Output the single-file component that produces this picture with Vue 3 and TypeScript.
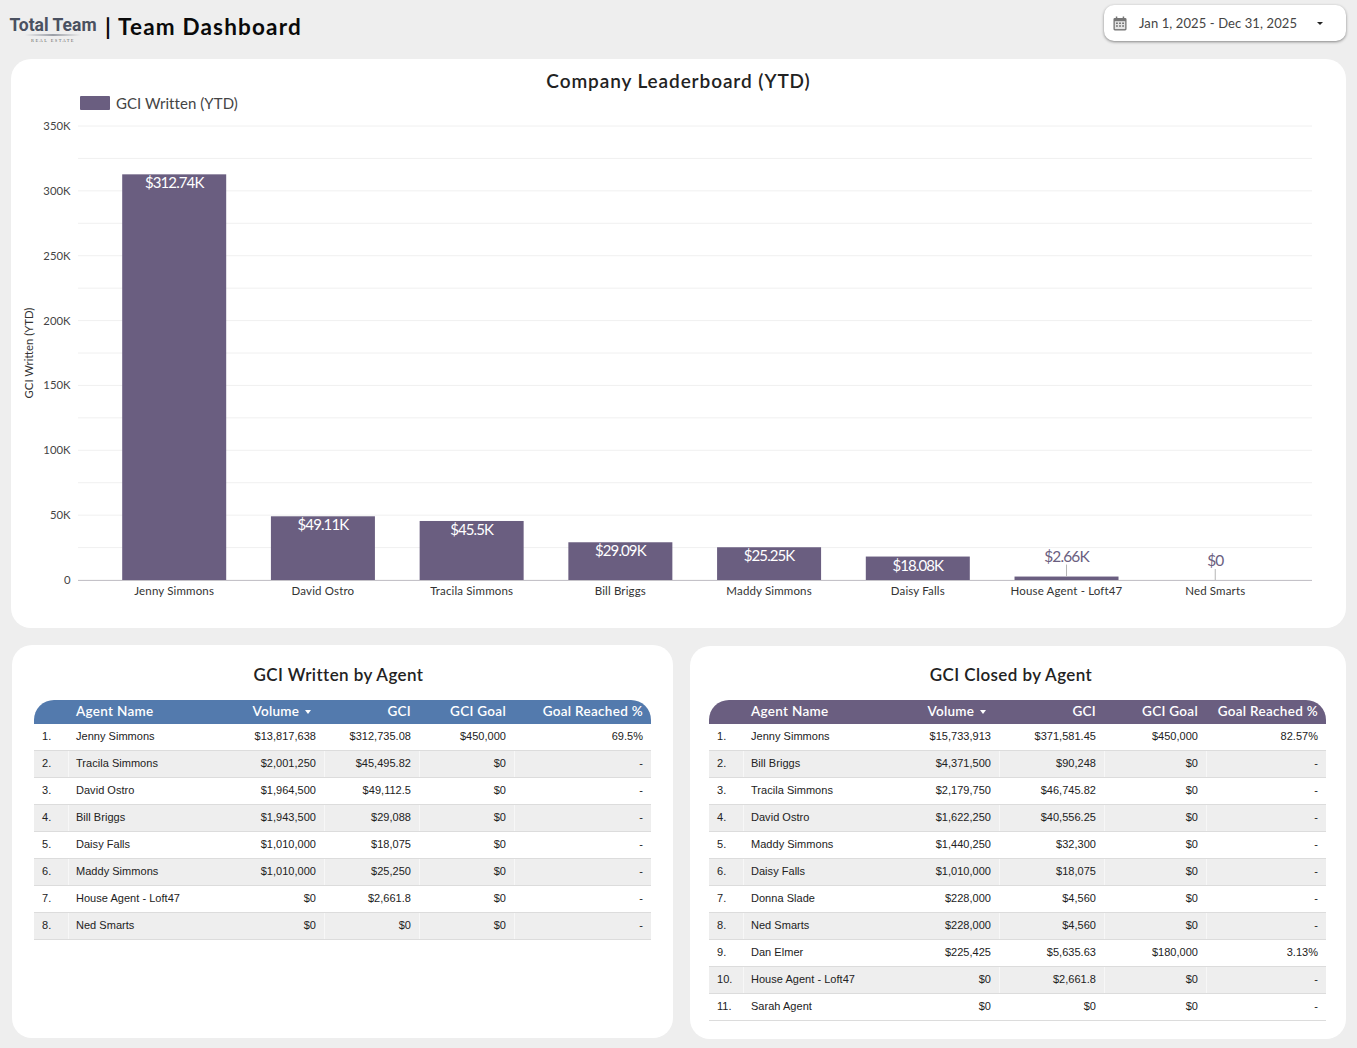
<script setup lang="ts">
interface Row { name: string; volume: string; gci: string; goal: string; reached: string }
interface Bar { name: string; value: number; label: string }

const sans = '"Lato", "Open Sans", sans-serif'
const baseY = 580
const scale = 454 / 350
const ticks: number[] = Array.from({ length: 15 }, (_, i) => i * 25)
const bars: Bar[] = [
  { name: 'Jenny Simmons', value: 312.74, label: '$312.74K' },
  { name: 'David Ostro', value: 49.11, label: '$49.11K' },
  { name: 'Tracila Simmons', value: 45.5, label: '$45.5K' },
  { name: 'Bill Briggs', value: 29.09, label: '$29.09K' },
  { name: 'Maddy Simmons', value: 25.25, label: '$25.25K' },
  { name: 'Daisy Falls', value: 18.08, label: '$18.08K' },
  { name: 'House Agent - Loft47', value: 2.66, label: '$2.66K' },
  { name: 'Ned Smarts', value: 0, label: '$0' }
]
const cx = (i: number): number => 174.2 + i * 148.72
const y = (v: number): number => baseY - v * scale

const written: Row[] = [
  { name: 'Jenny Simmons', volume: '$13,817,638', gci: '$312,735.08', goal: '$450,000', reached: '69.5%' },
  { name: 'Tracila Simmons', volume: '$2,001,250', gci: '$45,495.82', goal: '$0', reached: '-' },
  { name: 'David Ostro', volume: '$1,964,500', gci: '$49,112.5', goal: '$0', reached: '-' },
  { name: 'Bill Briggs', volume: '$1,943,500', gci: '$29,088', goal: '$0', reached: '-' },
  { name: 'Daisy Falls', volume: '$1,010,000', gci: '$18,075', goal: '$0', reached: '-' },
  { name: 'Maddy Simmons', volume: '$1,010,000', gci: '$25,250', goal: '$0', reached: '-' },
  { name: 'House Agent - Loft47', volume: '$0', gci: '$2,661.8', goal: '$0', reached: '-' },
  { name: 'Ned Smarts', volume: '$0', gci: '$0', goal: '$0', reached: '-' }
]
const closed: Row[] = [
  { name: 'Jenny Simmons', volume: '$15,733,913', gci: '$371,581.45', goal: '$450,000', reached: '82.57%' },
  { name: 'Bill Briggs', volume: '$4,371,500', gci: '$90,248', goal: '$0', reached: '-' },
  { name: 'Tracila Simmons', volume: '$2,179,750', gci: '$46,745.82', goal: '$0', reached: '-' },
  { name: 'David Ostro', volume: '$1,622,250', gci: '$40,556.25', goal: '$0', reached: '-' },
  { name: 'Maddy Simmons', volume: '$1,440,250', gci: '$32,300', goal: '$0', reached: '-' },
  { name: 'Daisy Falls', volume: '$1,010,000', gci: '$18,075', goal: '$0', reached: '-' },
  { name: 'Donna Slade', volume: '$228,000', gci: '$4,560', goal: '$0', reached: '-' },
  { name: 'Ned Smarts', volume: '$228,000', gci: '$4,560', goal: '$0', reached: '-' },
  { name: 'Dan Elmer', volume: '$225,425', gci: '$5,635.63', goal: '$180,000', reached: '3.13%' },
  { name: 'House Agent - Loft47', volume: '$0', gci: '$2,661.8', goal: '$0', reached: '-' },
  { name: 'Sarah Agent', volume: '$0', gci: '$0', goal: '$0', reached: '-' }
]
const panels = [
  { title: 'GCI Written by Agent', rows: written, cls: 'written' },
  { title: 'GCI Closed by Agent', rows: closed, cls: 'closed' }
]
</script>

<template>
  <div class="page">
    <header class="top">
      <div class="brand">
        <div class="logo">
          <span class="logo-main">Total Team</span>
          <span class="logo-swoosh"></span>
          <span class="logo-sub">REAL ESTATE</span>
        </div>
        <h1 class="heading">| Team Dashboard</h1>
      </div>
      <div class="date">
        <svg class="cal" width="14" height="15" viewBox="0 0 15 16">
          <path fill="#757575" d="M3 0.5h1.6v1.5h5.8V0.5H12V2h1a1.5 1.5 0 0 1 1.5 1.5v10.5a1.5 1.5 0 0 1-1.5 1.5H2A1.5 1.5 0 0 1 .5 14V3.5A1.5 1.5 0 0 1 2 2h1z"/>
          <path fill="#e4e4e4" d="M1.900 5.500h11.200V14H1.900z"/>
          <path fill="#757575" d="M3.200 7h2v1.600h-2zM6.500 7h2v1.600h-2zM9.800 7h2v1.600h-2zM3.200 10h2v1.600h-2zM6.500 10h2v1.600h-2zM9.800 10h2v1.600h-2z"/>
        </svg>
        <span class="date-text">Jan 1, 2025 - Dec 31, 2025</span>
        <span class="caret"></span>
      </div>
    </header>

    <section class="card chart-card">
      <h2 class="chart-title">Company Leaderboard (YTD)</h2>
      <div class="legend"><span class="swatch"></span><span>GCI Written (YTD)</span></div>
      <svg class="chart" width="1335" height="502" viewBox="11 118 1335 502" :font-family="sans">
        <line v-for="t in ticks" :key="t" x1="78" x2="1312" :y1="y(t)" :y2="y(t)" stroke="#f0f0f0" />
        <template v-for="t in ticks" :key="'l' + t">
          <text v-if="t % 50 === 0" x="70.500" :y="y(t) + 4" text-anchor="end" font-size="11.300" fill="#444">{{ t === 0 ? '0' : t + 'K' }}</text>
        </template>
        <text transform="translate(33 353) rotate(-90)" text-anchor="middle" font-size="11.300" fill="#333">GCI Written (YTD)</text>
        <g v-for="(b, i) in bars" :key="b.name">
          <rect :x="cx(i) - 52" :y="y(b.value)" width="104" :height="b.value * scale" fill="#6a5e80" />
          <text v-if="b.value > 10" :x="cx(i)" :y="y(b.value) + 14" text-anchor="middle" font-size="15" letter-spacing="-0.9" fill="#fff">{{ b.label }}</text>
          <template v-else>
            <line :x1="cx(i)" :x2="cx(i)" :y1="y(b.value) - (b.value > 0 ? 12 : 11)" :y2="y(b.value)" stroke="#b5b5b5" />
            <text :x="cx(i)" :y="b.value > 0 ? 562 : 566" text-anchor="middle" font-size="15.500" letter-spacing="-0.9" fill="#6a5e80">{{ b.label }}</text>
          </template>
          <text :x="cx(i)" y="595" text-anchor="middle" font-size="11.500" letter-spacing="0.15" fill="#333">{{ b.name }}</text>
        </g>
        <line x1="78" x2="1312" y1="580.500" y2="580.500" stroke="#c4c2c8" />
      </svg>
    </section>

    <div class="panels">
      <section v-for="p in panels" :key="p.cls" class="card panel" :class="p.cls">
        <h2 class="panel-title">{{ p.title }}</h2>
        <div class="table">
          <div class="row head">
            <span></span>
            <span class="cell">Agent Name</span>
            <span class="cell num sorted">Volume <i class="sort"></i></span>
            <span class="cell num">GCI</span>
            <span class="cell num">GCI Goal</span>
            <span class="cell num">Goal Reached %</span>
          </div>
          <div v-for="(r, i) in p.rows" :key="r.name" class="row body">
            <span class="cell idx">{{ i + 1 }}.</span>
            <span class="cell name">{{ r.name }}</span>
            <span class="cell num vol">{{ r.volume }}</span>
            <span class="cell num">{{ r.gci }}</span>
            <span class="cell num">{{ r.goal }}</span>
            <span class="cell num">{{ r.reached }}</span>
          </div>
        </div>
      </section>
    </div>
  </div>
</template>

<style>
html, body { background: #eeeeee; overflow: hidden; }
</style>

<style scoped>
.page {
  width: 1357px;
  height: 1048px;
  box-sizing: border-box;
  background: #eeeeee;
  font-family: "Lato", "Open Sans", sans-serif;
  color: #222;
  overflow: hidden;
}
.top {
  height: 59px;
  box-sizing: border-box;
  display: flex;
  justify-content: space-between;
  align-items: flex-start;
  padding: 5px 11px 0 9px;
}
.brand { display: flex; align-items: flex-start; }
.logo { width: 88px; display: flex; flex-direction: column; align-items: center; padding-top: 10px; }
.logo-main {
  font: 700 17.500px/20px Roboto, sans-serif;
  color: #4a5160;
  white-space: nowrap;
}
.logo-swoosh {
  width: 56px;
  height: 2px;
  margin-top: -1px;
  background: linear-gradient(90deg, transparent, #9a9ea6 50%, transparent);
}
.logo-sub {
  font: 4.500px/6px "Liberation Serif", serif;
  letter-spacing: 1.4px;
  color: #666;
  margin-top: 2px;
  white-space: nowrap;
}
.heading {
  margin: 7px 0 0 8px;
  font-size: 22.500px;
  line-height: 30px;
  font-weight: 700;
  letter-spacing: 1.18px;
  color: #0a0a0a;
  white-space: nowrap;
}
.date {
  width: 242px;
  height: 36px;
  box-sizing: border-box;
  background: #fff;
  border-radius: 10px;
  box-shadow: 0 1px 3px rgba(0, 0, 0, 0.45);
  display: flex;
  align-items: center;
  padding-left: 9px;
}
.date-text { margin-left: 12px; font-size: 13px; letter-spacing: 0.1px; color: #444; white-space: nowrap; }
.caret {
  margin-left: 20px;
  border-left: 3px solid transparent;
  border-right: 3px solid transparent;
  border-top: 3px solid #222;
}
.card { background: #fff; border-radius: 20px; box-sizing: border-box; }
.chart-card { width: 1335px; height: 569px; margin-left: 11px; padding-top: 10px; }
.chart-title {
  margin: 0;
  text-align: center;
  font-size: 19px;
  line-height: 24px;
  font-weight: 600;
  letter-spacing: 0.9px;
  color: #222;
}
.legend {
  display: flex;
  align-items: center;
  gap: 6px;
  height: 20px;
  margin: 0 0 5px 69px;
  font-size: 15px;
  letter-spacing: 0.05px;
  color: #444;
}
.swatch { width: 30px; height: 14px; background: #6a5e80; border-radius: 1px; }
.chart { display: block; }
.panels { display: flex; align-items: flex-start; margin: 17px 0 0 12px; gap: 17px; }
.panel { height: 393px; }
.written { width: 661px; padding: 19px 0 0 22px; }
.closed { width: 656px; margin-top: 1px; padding: 18px 0 0 19px; }
.panel-title {
  width: 617px;
  margin: 0 0 14px;
  text-align: center;
  font-size: 17px;
  line-height: 22px;
  font-weight: 600;
  letter-spacing: 0.4px;
  color: #222;
  box-sizing: border-box;
}
.written .panel-title { padding-right: 8px; }
.closed .panel-title { padding-right: 13px; }
.table { width: 617px; }
.row { display: grid; }
.written .row { grid-template-columns: 34px 161px 95px 95px 95px 137px; }
.closed .row { grid-template-columns: 34px 161px 95px 105px 102px 120px; }
.head {
  height: 24px;
  padding-bottom: 2px;
  align-items: center;
  color: #fff;
  font-size: 13.500px;
  font-weight: 600;
  letter-spacing: 0.3px;
  border-radius: 20px 20px 0 0;
  box-sizing: border-box;
}
.written .head { background: #537aad; }
.closed .head { background: #6a5e80; }
.body {
  height: 27px;
  box-sizing: border-box;
  align-items: stretch;
  font-family: "Liberation Sans", Arial, sans-serif;
  font-size: 11px;
  letter-spacing: 0.03px;
  color: #222;
  border-bottom: 1px solid #dcdcdc;
}
.body:nth-child(odd) { background: #eeeeee; }
.body .cell { display: flex; align-items: center; padding-bottom: 2px; }
.body:nth-child(odd) .cell:not(.vol) { box-shadow: inset 1px 0 0 #f7f7f7; }
.body:nth-child(odd) .cell.idx { box-shadow: none; }
.cell { padding: 0 8px; white-space: nowrap; min-width: 0; }
.body .num { justify-content: flex-end; }
.head .num { text-align: right; }
.sorted { padding-right: 13px; }
.sort {
  display: inline-block;
  vertical-align: 2px;
  margin-left: 2px;
  border-left: 3px solid transparent;
  border-right: 3px solid transparent;
  border-top: 4px solid #fff;
}
</style>
